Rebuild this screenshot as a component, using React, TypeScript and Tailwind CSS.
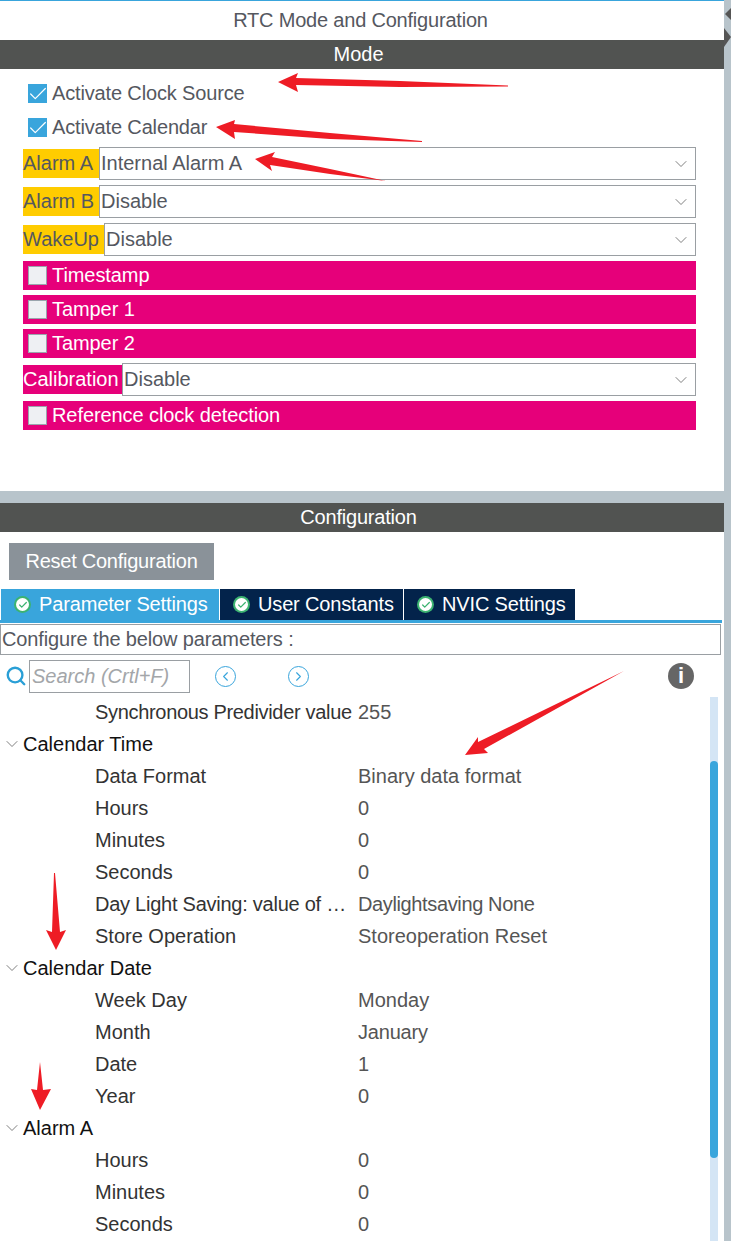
import { Check, ChevronDown, ChevronLeft, ChevronRight, Search } from "lucide-react";

const FONT = "font-['Liberation_Sans',Arial,sans-serif]";

type Row =
  | { kind: "section"; name: string }
  | { kind: "param"; name: string; value: string; nameClass?: string; valueClass?: string };

const ROWS: Row[] = [
  { kind: "param", name: "Synchronous Predivider value", value: "255", nameClass: "tracking-[-0.32px]" },
  { kind: "section", name: "Calendar Time" },
  { kind: "param", name: "Data Format", value: "Binary data format" },
  { kind: "param", name: "Hours", value: "0" },
  { kind: "param", name: "Minutes", value: "0" },
  { kind: "param", name: "Seconds", value: "0" },
  {
    kind: "param",
    name: "Day Light Saving: value of …",
    value: "Daylightsaving None",
    nameClass: "tracking-[-0.25px]",
    valueClass: "tracking-[-0.37px]",
  },
  { kind: "param", name: "Store Operation", value: "Storeoperation Reset" },
  { kind: "section", name: "Calendar Date" },
  { kind: "param", name: "Week Day", value: "Monday" },
  { kind: "param", name: "Month", value: "January", valueClass: "tracking-[-0.2px]" },
  { kind: "param", name: "Date", value: "1" },
  { kind: "param", name: "Year", value: "0" },
  { kind: "section", name: "Alarm A" },
  { kind: "param", name: "Hours", value: "0" },
  { kind: "param", name: "Minutes", value: "0" },
  { kind: "param", name: "Seconds", value: "0" },
];

function Box({ checked }: { checked?: boolean }) {
  return checked ? (
    <span className="flex h-[19px] w-[19px] shrink-0 items-center justify-center bg-[#39a5dc]">
      <Check size={22} strokeWidth={1.3} className="shrink-0 text-white" />
    </span>
  ) : (
    <span className="h-[19px] w-[19px] shrink-0 border border-[#9aa5ad] bg-[#eef0f3]" />
  );
}

function CheckRow({ label }: { label: string }) {
  return (
    <div className="flex h-[29px] items-center gap-[5px] bg-[#e6007a] pl-[5px] text-white">
      <Box />
      <span className="-mt-px tracking-[-0.08px]">{label}</span>
    </div>
  );
}

function SelectRow({
  label,
  value,
  color,
  labelWidth,
  light,
}: {
  label: string;
  value: string;
  color: string;
  labelWidth: string;
  light?: boolean;
}) {
  return (
    <div className="flex h-[33px] items-center">
      <span className={`flex h-[29px] items-center whitespace-nowrap pb-[2px] ${color} ${labelWidth} ${light ? "text-white" : "text-[#55585f]"}`}>
        {label}
      </span>
      <div className="flex h-[33px] min-w-0 flex-1 items-center justify-between border border-[#9a9fa3] bg-white pl-[1px] pr-[4px] text-[#55585f]">
        <span className="-mt-px">{value}</span>
        <ChevronDown size={20} strokeWidth={1} className="text-[#666]" />
      </div>
    </div>
  );
}

function Tab({ label, active, width }: { label: string; active?: boolean; width: string }) {
  return (
    <div className={`flex h-[31px] items-center gap-[8px] pl-[13px] text-white ${width} ${active ? "bg-[#39a5dc]" : "bg-[#03234b]"}`}>
      <span className="flex h-[17px] w-[17px] items-center justify-center rounded-full bg-[#3cb371]">
        <span className="flex h-[13px] w-[13px] items-center justify-center rounded-full bg-white">
          <Check size={10} strokeWidth={3} className="text-[#3cb371]" />
        </span>
      </span>
      <span className="-mt-px tracking-[-0.15px]">{label}</span>
    </div>
  );
}

function Arrows() {
  return (
    <svg className="pointer-events-none absolute left-0 top-0" width="731" height="1241" viewBox="0 0 731 1241">
      <g fill="#ee1c25">
        <polygon points="278,82 298,73 296,78 400,81 508,85.5 508,86.5 400,87 296,85 298,92" />
        <polygon points="216,127 235,120 234,124 330,133 422,141 422,142 330,139 234,132 235,139" />
        <polygon points="255,159 275,152 272,157 330,169 386,181 330,174 270,165 272,171" />
        <polygon points="465,755 478,737 478,742 624,671 484,749 488,753" />
        <polygon points="56,950 46,930 52,932 54,873 55,873 60,932 66,930" />
        <polygon points="40,1110 31,1089 37,1090 40,1062 43,1090 51,1089" />
      </g>
    </svg>
  );
}

export default function App() {
  return (
    <div className={`${FONT} relative h-[1241px] w-[731px] overflow-hidden bg-white text-[20px] leading-none`}>
      {/* right rail */}
      <div className="absolute right-0 top-0 h-full w-[7px] bg-[#b8c4cb]">
        <svg width="7" height="48" viewBox="0 0 7 48" className="absolute left-0 top-0">
          <polygon points="7,8 1,14 7,20" fill="#555" />
          <polygon points="0,28 7,37 0,47" fill="#555" />
        </svg>
      </div>

      <div className="w-[724px]">
        <div className="h-px bg-[#39a5dc]" />
        <div className="flex h-[38px] items-center justify-center pr-[3px] tracking-[-0.2px] text-[#55585f]">RTC Mode and Configuration</div>
        <div className="mt-px flex h-[29px] items-center justify-center bg-[#515351] pb-px pr-[7px] text-white">Mode</div>

        <div className="h-[422px] pl-[23px] pr-[28px]">
          <div className="flex h-[34px] items-center gap-[5px] pl-[5px] pt-[15px] text-[#55585f]">
            <Box checked />
            <span className="-mt-px tracking-[-0.15px]">Activate Clock Source</span>
          </div>
          <div className="mt-[15px] flex h-[19px] items-center gap-[5px] pl-[5px] text-[#55585f]">
            <Box checked />
            <span className="-mt-px tracking-[-0.15px]">Activate Calendar</span>
          </div>
          <div className="mt-[10px] flex flex-col gap-[5px]">
            <SelectRow label="Alarm A" value="Internal Alarm A" color="bg-[#ffcc00]" labelWidth="w-[76px]" />
            <SelectRow label="Alarm B" value="Disable" color="bg-[#ffcc00]" labelWidth="w-[76px]" />
            <SelectRow label="WakeUp" value="Disable" color="bg-[#ffcc00]" labelWidth="w-[81px]" />
            <CheckRow label="Timestamp" />
            <CheckRow label="Tamper 1" />
            <CheckRow label="Tamper 2" />
            <SelectRow label="Calibration" value="Disable" color="bg-[#e6007a]" labelWidth="w-[99px]" light />
            <CheckRow label="Reference clock detection" />
          </div>
        </div>

        <div className="h-[12px] bg-[#b8c4cb]" />
        <div className="flex h-[29px] items-center justify-center bg-[#515351] pb-px pr-[7px] tracking-[-0.2px] text-white">Configuration</div>

        <div className="pl-[9px] pt-[11px]">
          <div className="flex h-[37px] w-[205px] items-center justify-center bg-[#8a9299] pb-px tracking-[-0.25px] text-white">Reset Configuration</div>
        </div>

        <div className="mt-[9px] flex gap-px pl-px">
          <Tab label="Parameter Settings" active width="w-[218px]" />
          <Tab label="User Constants" width="w-[183px]" />
          <Tab label="NVIC Settings" width="w-[171px]" />
        </div>
        <div className="h-[3px] w-[722px] bg-[#39a5dc]" />

        <div className="mt-px flex h-[31px] w-[721px] items-center border border-[#9a9fa3] pb-px pl-px tracking-[-0.13px] text-[#55585f]">
          Configure the below parameters :
        </div>

        <div className="mt-[5px] flex h-[32px] items-center pl-[5px]">
          <Search size={22} strokeWidth={2.6} className="text-[#2a9fd6]" />
          <div className="ml-[2px] flex h-[33px] w-[161px] items-center whitespace-nowrap border border-[#9a9fa3] pb-px pl-[2px] italic text-[#a3a6a9]">
            Search (Crtl+F)
          </div>
          <span className="ml-[25px] flex h-[21px] w-[21px] items-center justify-center rounded-full border-[1.5px] border-[#39a5dc] text-[#39a5dc]">
            <ChevronLeft size={15} strokeWidth={1.8} />
          </span>
          <span className="ml-[52px] flex h-[21px] w-[21px] items-center justify-center rounded-full border-[1.5px] border-[#39a5dc] text-[#39a5dc]">
            <ChevronRight size={15} strokeWidth={1.8} />
          </span>
          <span className="ml-[359px] flex h-[26px] w-[26px] items-center justify-center rounded-full bg-[#666] text-[22px] font-bold text-white">
            i
          </span>
        </div>

        <div className="relative mt-[4px]">
          <div className="absolute right-[6px] top-px h-[544px] w-[8px] bg-[#d4e5f5]">
            <div className="mt-[64px] h-[397px] rounded-full bg-[#39a5dc]" />
          </div>
          {ROWS.map((row, i) =>
            row.kind === "section" ? (
              <div key={i} className="flex h-[32px] items-center pb-px pl-[2px] text-[#111]">
                <ChevronDown size={20} strokeWidth={1} className="text-[#666]" />
                <span className="ml-px">{row.name}</span>
              </div>
            ) : (
              <div key={i} className="flex h-[32px] items-center pb-px pl-[95px]">
                <span className={`w-[263px] shrink-0 whitespace-nowrap text-[#333] ${row.nameClass ?? ""}`}>{row.name}</span>
                <span className={`text-[#555] ${row.valueClass ?? ""}`}>{row.value}</span>
              </div>
            )
          )}
        </div>
      </div>

      <Arrows />
    </div>
  );
}
